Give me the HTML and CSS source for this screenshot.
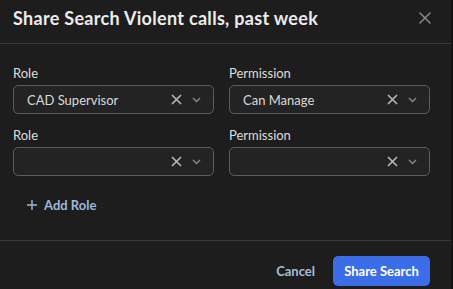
FILE: index.html
```html
<!DOCTYPE html>
<html lang="en">
<head>
  <meta charset="UTF-8" />
  <title>Share Search</title>
  <link rel="stylesheet" href="styles.css">
</head>
<body>
  <div class="dialog">
    <div class="dialog-header">
      <h2>Share Search Violent calls, past week</h2>
      <button class="close-btn" aria-label="Close">
        <svg width="12" height="12" viewBox="0 0 12 12"><path d="M1 1L11 11M11 1L1 11" stroke="currentColor" stroke-width="1.5" stroke-linecap="round"/></svg>
      </button>
    </div>

    <div class="dialog-body">
      <div class="grid">
        <div class="field">
          <label>Role</label>
          <div class="select">
            <span class="value">CAD Supervisor</span>
            <span class="clear"><svg width="11" height="11" viewBox="0 0 11 11"><path d="M1 1L10 10M10 1L1 10" stroke="currentColor" stroke-width="1.6"/></svg></span>
            <span class="chevron"><svg width="9" height="6" viewBox="0 0 9 6"><path d="M1 1L4.5 4.5L8 1" fill="none" stroke="currentColor" stroke-width="1.3"/></svg></span>
          </div>
        </div>
        <div class="field">
          <label>Permission</label>
          <div class="select">
            <span class="value">Can Manage</span>
            <span class="clear"><svg width="11" height="11" viewBox="0 0 11 11"><path d="M1 1L10 10M10 1L1 10" stroke="currentColor" stroke-width="1.6"/></svg></span>
            <span class="chevron"><svg width="9" height="6" viewBox="0 0 9 6"><path d="M1 1L4.5 4.5L8 1" fill="none" stroke="currentColor" stroke-width="1.3"/></svg></span>
          </div>
        </div>
        <div class="field">
          <label>Role</label>
          <div class="select">
            <span class="value"></span>
            <span class="clear"><svg width="11" height="11" viewBox="0 0 11 11"><path d="M1 1L10 10M10 1L1 10" stroke="currentColor" stroke-width="1.6"/></svg></span>
            <span class="chevron"><svg width="9" height="6" viewBox="0 0 9 6"><path d="M1 1L4.5 4.5L8 1" fill="none" stroke="currentColor" stroke-width="1.3"/></svg></span>
          </div>
        </div>
        <div class="field">
          <label>Permission</label>
          <div class="select">
            <span class="value"></span>
            <span class="clear"><svg width="11" height="11" viewBox="0 0 11 11"><path d="M1 1L10 10M10 1L1 10" stroke="currentColor" stroke-width="1.6"/></svg></span>
            <span class="chevron"><svg width="9" height="6" viewBox="0 0 9 6"><path d="M1 1L4.5 4.5L8 1" fill="none" stroke="currentColor" stroke-width="1.3"/></svg></span>
          </div>
        </div>
      </div>

      <button class="add-role">
        <svg width="10" height="10" viewBox="0 0 10 10"><path d="M5 0V10M0 5H10" stroke="currentColor" stroke-width="1.4"/></svg>
        Add Role
      </button>
    </div>

    <div class="dialog-footer">
      <button class="btn-cancel">Cancel</button>
      <button class="btn-primary">Share Search</button>
    </div>
  </div>
</body>
</html>
```

FILE: styles.css
```css
body {
  margin: 0;
  background: #141414;
  font-family: Lato, "Open Sans", sans-serif;
  color: #e4e4e4;
}

.dialog {
  width: 451px;
  height: 289px;
  background: #1d1d1d;
  display: flex;
  flex-direction: column;
}

.dialog-header {
  height: 44px;
  box-sizing: border-box;
  padding: 0 20px 0 13px;
  display: flex;
  align-items: center;
  justify-content: space-between;
  border-bottom: 1px solid #3a3a3a;
}

.dialog-header h2 {
  margin: 0;
  margin-top: -7px;
  font-size: 18px;
  font-weight: 700;
  letter-spacing: 0.3px;
  color: #ececec;
}

.close-btn {
  background: none;
  border: none;
  padding: 0;
  color: #8a8a8a;
  display: flex;
  margin-top: -8px;
}

.dialog-body {
  padding: 21px 21px 0 13px;
  height: 197px;
  box-sizing: border-box;
  border-bottom: 1px solid #3a3a3a;
}

.grid {
  display: grid;
  grid-template-columns: 201px 201px;
  column-gap: 15px;
  row-gap: 13px;
}

.field label {
  display: block;
  font-size: 13px;
  color: #dedede;
  margin-bottom: 4px;
  line-height: 16px;
}

.select {
  height: 29px;
  box-sizing: border-box;
  border: 1px solid #5c5c5c;
  border-radius: 5px;
  background: #232323;
  display: flex;
  align-items: center;
  padding: 0 12px 0 13px;
}

.select .value {
  flex: 1;
  font-size: 13px;
  color: #dadada;
}

.select .clear {
  color: #b8b8b8;
  display: flex;
  margin-right: 10px;
}

.select .chevron {
  color: #8c8c8c;
  display: flex;
}

.add-role {
  margin-top: 21px;
  margin-left: 14px;
  background: none;
  border: none;
  padding: 0;
  font-family: inherit;
  font-size: 13px;
  font-weight: 700;
  color: #9fb8dc;
  display: flex;
  align-items: center;
  gap: 7px;
}

.dialog-footer {
  flex: 1;
  display: flex;
  justify-content: flex-end;
  align-items: flex-start;
  padding: 15px 21px 0 0;
  gap: 18px;
}

.btn-cancel {
  background: none;
  border: none;
  font-family: inherit;
  font-size: 13px;
  font-weight: 700;
  color: #a7bddb;
  padding: 0;
  height: 30px;
}

.btn-primary {
  height: 30px;
  width: 97px;
  border: none;
  border-radius: 5px;
  background: #3b6ee6;
  color: #ffffff;
  font-family: inherit;
  font-size: 13px;
  font-weight: 700;
}
```
